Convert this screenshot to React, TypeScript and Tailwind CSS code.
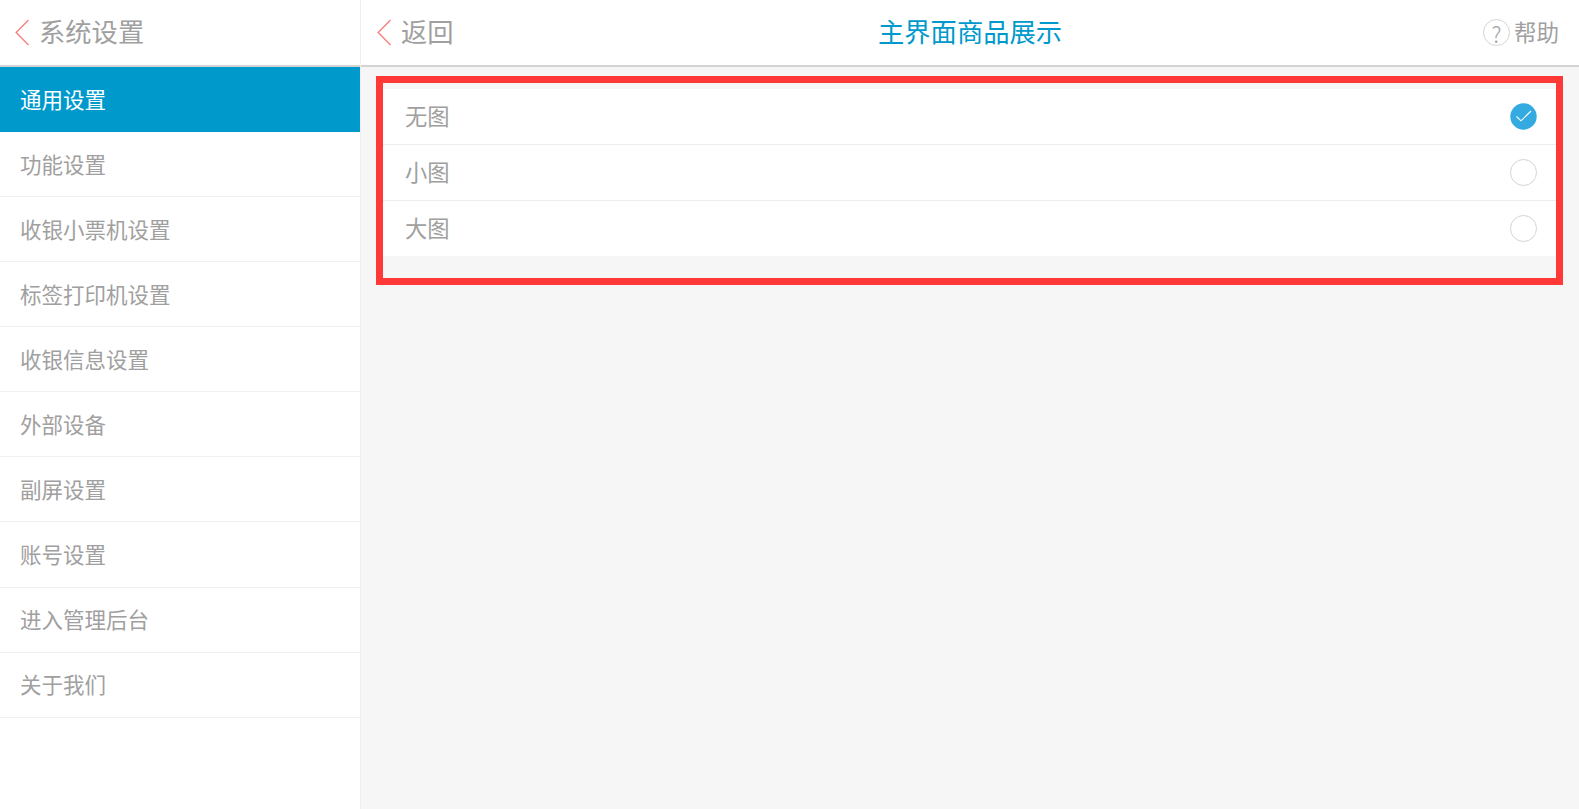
import React from 'react';

const menuItems = [
  '功能设置',
  '收银小票机设置',
  '标签打印机设置',
  '收银信息设置',
  '外部设备',
  '副屏设置',
  '账号设置',
  '进入管理后台',
  '关于我们',
];

const options = [
  { label: '无图', checked: true },
  { label: '小图', checked: false },
  { label: '大图', checked: false },
];

const BackChevron = () => (
  <svg className="w-[15px] h-[27px] shrink-0" viewBox="0 0 15 27" fill="none" stroke="#f98080" strokeWidth={1.4}>
    <path d="M13.5 1 L1.2 13.5 L13.5 26" />
  </svg>
);

const Radio = ({ checked }: { checked: boolean }) =>
  checked ? (
    <svg className="w-[27px] h-[27px]" viewBox="0 0 27 27" fill="none">
      <circle cx="13.5" cy="13.5" r="13.2" fill="#34abe0" />
      <path d="M6.5 13.5 L11 17.8 L21 8" stroke="#fff" strokeWidth={1.1} />
    </svg>
  ) : (
    <div className="w-[27px] h-[27px] rounded-full border-[1.5px] border-[#d4d4d4] bg-white" />
  );

export default function App() {
  return (
    <div className="flex h-[809px] w-[1579px] overflow-hidden bg-[#f6f6f6] font-['Noto_Sans_CJK_SC',sans-serif] text-[#a0a0a0]">
      {/* Sidebar */}
      <aside className="w-[361px] shrink-0 bg-white border-r border-[#eeeeee] flex flex-col">
        <div className="h-[67px] shrink-0 border-b-2 border-[#d4d4d4] flex items-center pl-[15px] gap-[9px]">
          <BackChevron />
          <span className="block pb-[2px] text-[26.3px] leading-none text-[#a0a0a0]">系统设置</span>
        </div>
        <div className="h-[65px] shrink-0 bg-[#0099cc] text-white flex items-center pl-[20px] text-[21.5px] leading-none">
          <span className="block pb-[2px]">通用设置</span>
        </div>
        {menuItems.map((item) => (
          <div
            key={item}
            className="h-[65.08px] shrink-0 border-b border-[#f0f0f0] flex items-center pl-[20px] text-[21.5px] leading-none"
          >
            <span className="block pb-[1px]">{item}</span>
          </div>
        ))}
      </aside>

      {/* Main */}
      <main className="flex-1 flex flex-col min-w-0">
        <header className="h-[67px] shrink-0 bg-white border-b-2 border-[#d4d4d4] flex items-center justify-between pl-[16px] pr-[20px] relative">
          <div className="flex items-center gap-[9px]">
            <BackChevron />
            <span className="block pb-[2px] text-[26.3px] leading-none">返回</span>
          </div>
          <h1 className="absolute left-[517px] pb-[2px] text-[26.3px] leading-none font-normal text-[#0099cc]">主界面商品展示</h1>
          <div className="flex items-center gap-[4px]">
            <div className="w-[27px] h-[27px] rounded-full border-[1.5px] border-[#d4d4d4] flex items-center justify-center text-[22px] font-light leading-none text-[#a0a0a0]">
              ?
            </div>
            <span className="block pb-[2px] text-[22.5px] leading-none">帮助</span>
          </div>
        </header>

        <div className="mt-[9px] ml-[15px] mr-[16px] h-[209px] border-[7px] border-[#ff3838] pt-[6px]">
          <div className="bg-white">
            {options.map((opt, i) => (
              <div
                key={opt.label}
                className={`flex items-center justify-between pl-[22px] pr-[19px] ${i < 2 ? 'h-[56px] border-b border-[#ececec]' : 'h-[55px]'}`}
              >
                <span className="block pb-[2px] text-[22.3px] leading-none">{opt.label}</span>
                <Radio checked={opt.checked} />
              </div>
            ))}
          </div>
        </div>
      </main>
    </div>
  );
}
